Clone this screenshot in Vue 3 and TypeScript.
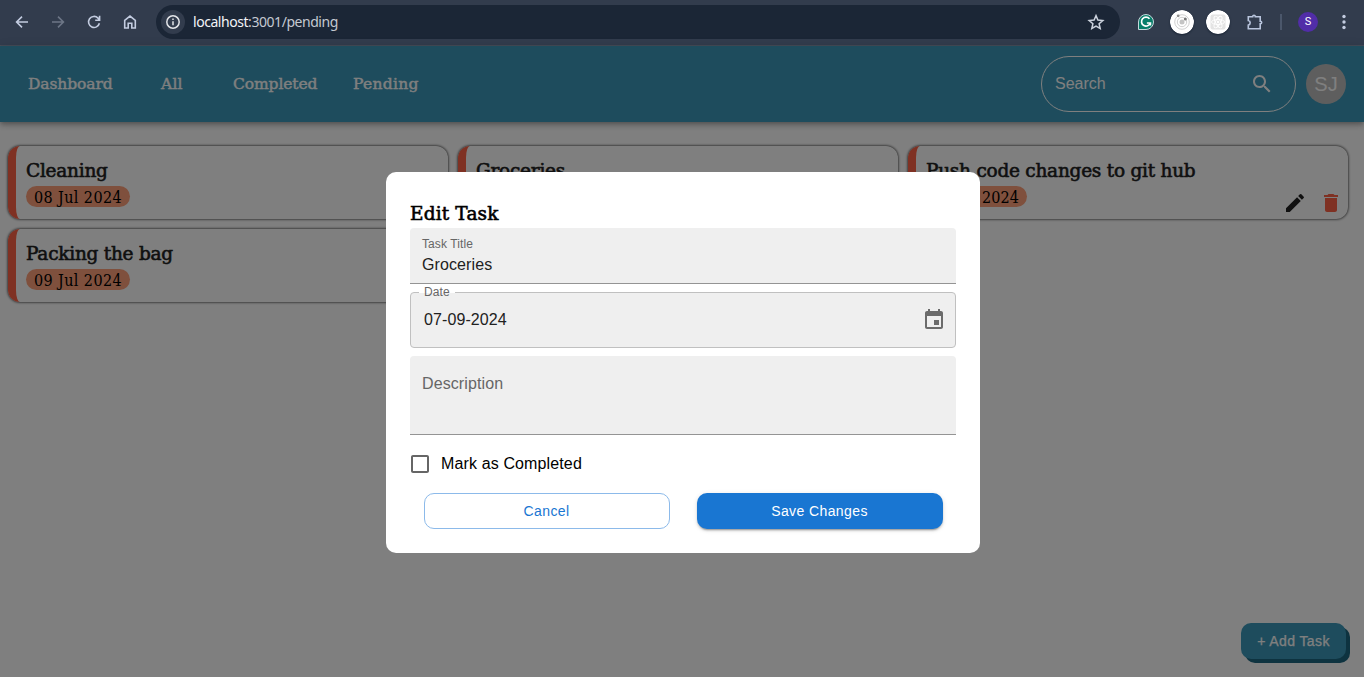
<script setup lang="ts">
import { ref } from 'vue'

interface Task {
  title: string
  date: string
  actions?: boolean
}

const links: { label: string; cls: string }[] = [
  { label: 'Dashboard', cls: 'dashboard' },
  { label: 'All', cls: 'all' },
  { label: 'Completed', cls: 'completed' },
  { label: 'Pending', cls: 'pending' },
]

const tasks: Task[] = [
  { title: 'Cleaning', date: '08 Jul 2024' },
  { title: 'Groceries', date: '09 Jul 2024' },
  { title: 'Push code changes to git hub', date: '17 Jul 2024', actions: true },
  { title: 'Packing the bag', date: '09 Jul 2024' },
]

const title = ref('Groceries')
const date = ref('07-09-2024')
</script>

<template>
  <div class="window">
    <header class="toolbar">
      <div class="nav-icons">
        <svg viewBox="0 0 16 16"><path d="M14 8H2.8M8 2.6 2.6 8 8 13.4" /></svg>
        <svg class="dim" viewBox="0 0 16 16"><path d="M2 8h11.2M8 2.6 13.4 8 8 13.4" /></svg>
        <svg viewBox="0 0 16 16"><path d="M13.4 9.2A5.5 5.5 0 1 1 12 4.1l1.4 1.5M13.6 1.8v4.4H9.2" /></svg>
        <svg viewBox="0 0 16 16"><path d="M2.7 14V6.4L8 2.1l5.3 4.3V14H9.8V9.3H6.2V14z" /></svg>
      </div>
      <div class="address">
        <span class="info"><svg viewBox="0 0 16 16"><circle cx="8" cy="8" r="6.2" /><path d="M8 7.2v4M8 4.5v1.6" /></svg></span>
        <span class="url"><b>localhost</b>:3001/pending</span>
        <svg class="star" viewBox="0 0 18 18"><path d="m9 2.6 1.9 4.5 4.9.4-3.7 3.2 1.1 4.8L9 13l-4.2 2.5 1.1-4.800-3.700-3.200 4.900-.4z" /></svg>
      </div>
      <div class="extensions">
        <svg class="grammarly" viewBox="0 0 16 16">
          <path d="M8 .5A7.5 7.5 0 1 1 8 15.5H.5V8A7.5 7.5 0 0 1 8 .5z" fill="#087d69" stroke="#c5d8dc" stroke-width="1" />
          <path d="M11.5 4.8A4.5 4.5 0 1 0 12.3 9H8.9M12.4 8.6v3" fill="none" stroke="#fff" stroke-width="1.7" />
        </svg>
        <svg class="round" viewBox="0 0 24 24">
          <circle cx="12" cy="12" r="12" fill="#fff" />
          <g fill="none" stroke="#c4c4c4"><circle cx="12" cy="12" r="7.3" stroke-width=".8" /><circle cx="12" cy="12" r="4.7" stroke-width=".8" /></g>
          <circle cx="12" cy="12" r="2.5" fill="#c4c4c4" /><circle cx="8.2" cy="5.8" r="1.4" fill="#8e8e8e" /><circle cx="15.3" cy="9" r="1.5" fill="#777" />
        </svg>
        <svg class="round" viewBox="0 0 24 24">
          <circle cx="12" cy="12" r="12" fill="#fff" />
          <rect x="4.5" y="4.5" width="15" height="15" rx="2" fill="#e4e4e4" />
          <g fill="none" stroke="#fff" stroke-width=".9"><ellipse cx="12" cy="12" rx="6.5" ry="2.5" /><ellipse cx="12" cy="12" rx="6.5" ry="2.5" transform="rotate(60 12 12)" /><ellipse cx="12" cy="12" rx="6.5" ry="2.5" transform="rotate(120 12 12)" /></g>
          <circle cx="12" cy="12" r="1.2" fill="#fff" />
        </svg>
        <svg class="puzzle" viewBox="0 0 18 18"><path d="M2.300 3.700h4.400c0-.9.500-1.400 1.300-1.400s1.300.5 1.300 1.400h4.900v4.600c.9 0 1.500.5 1.500 1.300s-.6 1.300-1.500 1.300v4.800H2.300v-3.600c1.200-.2 1.900-1 1.900-2.300s-.7-2.100-1.900-2.300z" /></svg>
      </div>
      <i class="divider"></i>
      <span class="profile">S</span>
      <svg class="dots" viewBox="0 0 4 16"><circle cx="2" cy="2.500" r="1.700" /><circle cx="2" cy="8" r="1.700" /><circle cx="2" cy="13.500" r="1.700" /></svg>
    </header>

    <div class="page">
      <nav class="navbar">
        <a v-for="link in links" :key="link.label" :class="link.cls">{{ link.label }}</a>
        <div class="search">
          <span>Search</span>
          <svg viewBox="0 0 24 24"><path d="M15.500 14h-.79l-.28-.27C15.410 12.590 16 11.110 16 9.500 16 5.910 13.090 3 9.500 3S3 5.910 3 9.500 5.910 16 9.500 16c1.610 0 3.090-.59 4.230-1.570l.27.28v.79l5 4.990L20.490 19l-4.990-5zm-6 0C7.010 14 5 11.990 5 9.500S7.010 5 9.500 5 14 7.010 14 9.500 11.990 14 9.500 14z" /></svg>
        </div>
        <div class="avatar">SJ</div>
      </nav>

      <main class="board">
        <article v-for="task in tasks" :key="task.title" class="card">
          <h3>{{ task.title }}</h3>
          <span class="date-pill" :class="{ narrow: task.actions }">{{ task.date }}</span>
          <div v-if="task.actions" class="actions">
            <svg class="edit" viewBox="0 0 24 24"><path d="M3 17.250V21h3.750L17.810 9.940l-3.750-3.750L3 17.250zM20.710 7.040c.39-.39.39-1.020 0-1.410l-2.340-2.340a.9959.9959 0 0 0-1.410 0l-1.830 1.830 3.750 3.750 1.830-1.830z" /></svg>
            <svg class="delete" viewBox="0 0 24 24"><path d="M6 19c0 1.100.9 2 2 2h8c1.100 0 2-.9 2-2V7H6v12zM19 4h-3.500l-1-1h-5l-1 1H5v2h14V4z" /></svg>
          </div>
        </article>
      </main>

      <button class="add">+ Add Task</button>

      <div class="backdrop">
        <section class="dialog">
          <h2>Edit Task</h2>
          <div class="filled task-title">
            <label>Task Title</label>
            <div>{{ title }}</div>
          </div>
          <div class="outlined">
            <label>Date</label>
            <span>{{ date }}</span>
            <svg viewBox="0 0 24 24"><path d="M17 12h-5v5h5v-5zM16 1v2H8V1H6v2H5c-1.110 0-1.990.9-1.990 2L3 19c0 1.100.89 2 2 2h14c1.100 0 2-.9 2-2V5c0-1.100-.9-2-2-2h-1V1h-2zm3 18H5V8h14v11z" /></svg>
          </div>
          <div class="filled description">Description</div>
          <div class="check">
            <svg viewBox="0 0 24 24"><path d="M19 5v14H5V5h14m0-2H5c-1.100 0-2 .9-2 2v14c0 1.100.9 2 2 2h14c1.100 0 2-.9 2-2V5c0-1.100-.9-2-2-2z" /></svg>
            <span>Mark as Completed</span>
          </div>
          <div class="buttons">
            <button class="cancel">Cancel</button>
            <button class="save">Save Changes</button>
          </div>
        </section>
      </div>
    </div>
  </div>
</template>

<style>
body {
  margin: 0;
  overflow: hidden;
}
</style>

<style scoped>
* {
  box-sizing: border-box;
}
svg {
  display: block;
  flex: none;
}
.window {
  width: 1364px;
  height: 677px;
  display: flex;
  flex-direction: column;
  font: 16px/1.2 "Liberation Sans", Arial, sans-serif;
}
.toolbar {
  height: 46px;
  flex: none;
  display: flex;
  align-items: center;
  padding: 0 18px 2px 14px;
  background: #323c4d;
  border-bottom: 1px solid #454c58;
}
.nav-icons {
  display: flex;
  gap: 20px;
  width: 142px;
}
.nav-icons svg {
  width: 16px;
  height: 16px;
  fill: none;
  stroke: #c3cce0;
  stroke-width: 1.600;
}
.nav-icons .dim {
  stroke: #6d7686;
}
.address {
  width: 964px;
  height: 34px;
  border-radius: 17px;
  background: #1b2636;
  display: flex;
  align-items: center;
  padding: 0 15px 0 5px;
}
.info {
  width: 24px;
  height: 24px;
  border-radius: 50%;
  background: #323c4d;
  display: grid;
  place-items: center;
}
.info svg {
  width: 16px;
  height: 16px;
  fill: none;
  stroke: #e4e6ea;
  stroke-width: 1.500;
}
.url {
  flex: 1;
  margin-left: 8px;
  color: #c4c9d1;
  font: 14px "Noto Sans", sans-serif;
  letter-spacing: -0.450px;
}
.url b {
  color: #f2f4f7;
  font-weight: 400;
}
.star {
  width: 18px;
  height: 18px;
  fill: none;
  stroke: #ccd2dd;
  stroke-width: 1.500;
}
.extensions {
  display: flex;
  align-items: center;
  gap: 12px;
  margin-left: 18px;
}
.grammarly {
  width: 16px;
  height: 16px;
  margin-right: 4px;
}
.round {
  width: 24px;
  height: 24px;
  border-radius: 50%;
  box-shadow: 0 1px 2px #1b2636;
}
.puzzle {
  width: 18px;
  height: 18px;
  margin-left: 4px;
  fill: none;
  stroke: #b9c5dd;
  stroke-width: 1.600;
}
.divider {
  width: 2px;
  height: 16px;
  margin-left: 16px;
  background: #4b576b;
}
.profile {
  width: 20px;
  height: 20px;
  margin-left: 16px;
  border-radius: 50%;
  background: #512da8;
  color: #fff;
  font: 11px/20px Roboto, sans-serif;
  text-align: center;
}
.dots {
  width: 4px;
  height: 16px;
  margin-left: auto;
  fill: #c3cce0;
}
.page {
  flex: 1;
  position: relative;
  background: #fff;
}
.navbar {
  height: 76px;
  display: flex;
  align-items: center;
  padding: 0 18px 0 28px;
  background: #3c99ba;
  box-shadow: 0 2px 4px -1px rgba(0, 0, 0, 0.2), 0 4px 5px rgba(0, 0, 0, 0.14), 0 1px 10px rgba(0, 0, 0, 0.12);
  color: #fff;
}
.navbar a {
  font: 15.500px "DejaVu Serif", serif;
  letter-spacing: -0.100px;
  -webkit-text-stroke: 0.400px #fff;
  white-space: nowrap;
}
.navbar .dashboard {
  width: 133px;
}
.navbar .all {
  width: 72px;
  letter-spacing: 0.200px;
}
.navbar .completed {
  width: 120px;
}
.navbar .pending {
  width: 100px;
  letter-spacing: 0.300px;
}
.search {
  width: 255px;
  height: 56px;
  margin: 0 10px 0 auto;
  padding: 0 21px 1px 13px;
  border: 1px solid #fff;
  border-radius: 28px;
  display: flex;
  align-items: center;
  justify-content: space-between;
}
.search svg {
  width: 24px;
  height: 24px;
  fill: #fff;
}
.avatar {
  width: 40px;
  height: 40px;
  border-radius: 50%;
  background: #bdbdbd;
  font-size: 20px;
  line-height: 40px;
  text-align: center;
}
.board {
  display: grid;
  grid-template-columns: repeat(3, 440px);
  grid-auto-rows: 73px;
  gap: 10px;
  padding: 24px 8px;
}
.card {
  position: relative;
  border-left: 8px solid #ff6347;
  border-radius: 12px;
  box-shadow: 0 0 3px #000;
  padding: 13px 10px 12px;
  font-family: "DejaVu Serif Condensed", "DejaVu Serif", serif;
  font-stretch: condensed;
  color: #000;
}
h2,
h3 {
  margin: 0;
  font: 18.500px/24px "DejaVu Serif", serif;
  letter-spacing: -0.250px;
  -webkit-text-stroke: 0.600px #212121;
  white-space: nowrap;
}
h3 {
  color: #212121;
}
.date-pill {
  display: block;
  width: 104px;
  height: 21px;
  margin-top: 3px;
  border-radius: 11px;
  background: #ffa07a;
  font-size: 16px;
  letter-spacing: 0.400px;
  line-height: 23px;
  text-align: center;
  white-space: nowrap;
}
.date-pill.narrow {
  width: 101px;
  letter-spacing: 0.150px;
}
.actions {
  position: absolute;
  right: 5px;
  bottom: 4px;
  display: flex;
  gap: 12px;
}
.actions svg {
  width: 24px;
  height: 24px;
}
.edit {
  fill: #212121;
}
.delete {
  fill: #ff6347;
}
.add {
  position: absolute;
  left: 1241px;
  top: 577px;
  width: 105px;
  height: 36px;
  padding: 0;
  border: 0;
  border-radius: 10px;
  background: #3c99ba;
  box-shadow: 4px 4px #1d6780;
  color: #fff;
  font: 14px "Liberation Sans", Arial, sans-serif;
  letter-spacing: 0.400px;
  -webkit-text-stroke: 0.250px #fff;
}
.backdrop {
  position: absolute;
  inset: 0;
  background: rgba(0, 0, 0, 0.5);
  display: flex;
  justify-content: center;
  align-items: flex-start;
  padding: 126px 0 0 2px;
}
.dialog {
  width: 594px;
  height: 381px;
  padding: 30px 24px 24px;
  border-radius: 10px;
  background: #fff;
}
.dialog h2 {
  height: 26px;
  letter-spacing: 0.150px;
  -webkit-text-stroke-color: #000;
}
.filled {
  background: #efefef;
  border-bottom: 1px solid #949494;
  border-radius: 4px 4px 0 0;
  padding: 0 12px;
}
.task-title {
  height: 56px;
  padding-top: 8px;
  color: #212121;
}
.task-title label {
  display: block;
  font-size: 12px;
  line-height: 16px;
  letter-spacing: 0.100px;
  color: #666;
}
.task-title div {
  line-height: 20px;
  margin-top: 3px;
  letter-spacing: 0.100px;
}
.outlined {
  position: relative;
  height: 56px;
  margin: 8px 0;
  padding: 0 9px 0 13px;
  border: 1px solid #c0c0c0;
  border-radius: 4px;
  background: #efefef;
  display: flex;
  align-items: center;
  justify-content: space-between;
  color: #212121;
  letter-spacing: 0.100px;
}
.outlined label {
  position: absolute;
  left: 8px;
  top: -8px;
  padding: 0 5px;
  font-size: 12px;
  line-height: 14px;
  color: #666;
  background: linear-gradient(#fff 8px, #efefef 8px);
}
.outlined svg {
  width: 24px;
  height: 24px;
  fill: #6b6b6b;
}
.description {
  height: 79px;
  padding-top: 18px;
  color: #666;
  letter-spacing: 0.100px;
}
.check {
  height: 58px;
  display: flex;
  align-items: center;
  gap: 9px;
  margin-left: -2px;
  letter-spacing: 0.130px;
}
.check svg {
  width: 24px;
  height: 24px;
  fill: #666;
}
.buttons {
  display: flex;
  justify-content: space-between;
  padding: 0 13px 0 14px;
}
.buttons button {
  width: 246px;
  height: 36px;
  padding: 0 7px 0 6px;
  border-radius: 10px;
  font: 14px "Liberation Sans", Arial, sans-serif;
  letter-spacing: 0.400px;
}
.cancel {
  border: 1px solid #8cbaea;
  background: #fff;
  color: #1976d2;
}
.save {
  border: 0;
  background: #1976d2;
  color: #fff;
  box-shadow: 0 3px 1px -2px rgba(0, 0, 0, 0.2), 0 2px 2px rgba(0, 0, 0, 0.14), 0 1px 5px rgba(0, 0, 0, 0.12);
}
</style>
